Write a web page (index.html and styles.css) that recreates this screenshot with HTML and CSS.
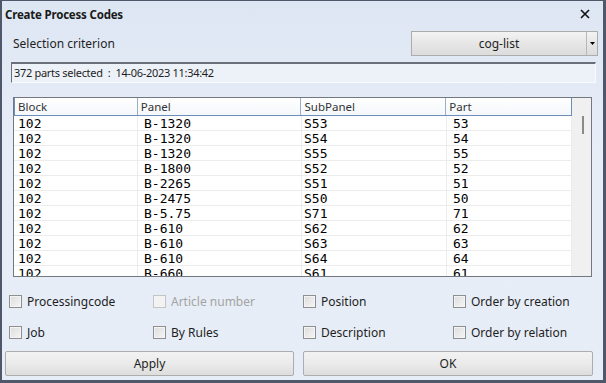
FILE: index.html
```html
<!DOCTYPE html>
<html lang="en">
<head>
    <meta charset="UTF-8">
    <title>Create Process Codes</title>
    <link rel="stylesheet" href="styles.css">
</head>
<body>
    <div class="window">
        <div class="titlebar">
            <span class="title">Create Process Codes</span>
            <svg class="close" width="10" height="10" viewBox="0 0 10 10">
                <path d="M1 1L9 9M9 1L1 9" stroke="#111" stroke-width="1.6"/>
            </svg>
        </div>

        <div class="criterion">
            <span>Selection criterion</span>
            <div class="combo">
                <span class="combo-text">cog-list</span>
                <span class="combo-arrow">
                    <svg width="5" height="3" viewBox="0 0 5 3"><path d="M0 0H5L2.5 3Z" fill="#000"/></svg>
                </span>
            </div>
        </div>

        <div class="status">372 parts selected &nbsp;: &nbsp;14-06-2023 11:34:42</div>

        <div class="grid">
            <div class="grid-main">
                <div class="row head">
                    <div class="c1">Block</div>
                    <div class="c2">Panel</div>
                    <div class="c3">SubPanel</div>
                    <div class="c4">Part</div>
                </div>
                <div class="row"><div class="c1">102</div><div class="c2">B-1320</div><div class="c3">S53</div><div class="c4">53</div></div>
                <div class="row"><div class="c1">102</div><div class="c2">B-1320</div><div class="c3">S54</div><div class="c4">54</div></div>
                <div class="row"><div class="c1">102</div><div class="c2">B-1320</div><div class="c3">S55</div><div class="c4">55</div></div>
                <div class="row"><div class="c1">102</div><div class="c2">B-1800</div><div class="c3">S52</div><div class="c4">52</div></div>
                <div class="row"><div class="c1">102</div><div class="c2">B-2265</div><div class="c3">S51</div><div class="c4">51</div></div>
                <div class="row"><div class="c1">102</div><div class="c2">B-2475</div><div class="c3">S50</div><div class="c4">50</div></div>
                <div class="row"><div class="c1">102</div><div class="c2">B-5.75</div><div class="c3">S71</div><div class="c4">71</div></div>
                <div class="row"><div class="c1">102</div><div class="c2">B-610</div><div class="c3">S62</div><div class="c4">62</div></div>
                <div class="row"><div class="c1">102</div><div class="c2">B-610</div><div class="c3">S63</div><div class="c4">63</div></div>
                <div class="row"><div class="c1">102</div><div class="c2">B-610</div><div class="c3">S64</div><div class="c4">64</div></div>
                <div class="row"><div class="c1">102</div><div class="c2">B-660</div><div class="c3">S61</div><div class="c4">61</div></div>
            </div>
            <div class="scrollbar"><span class="thumb"></span></div>
        </div>

        <div class="options">
            <label class="check"><span class="box"></span>Processingcode</label>
            <label class="check disabled"><span class="box"></span>Article number</label>
            <label class="check"><span class="box"></span>Position</label>
            <label class="check"><span class="box"></span>Order by creation</label>
            <label class="check"><span class="box"></span>Job</label>
            <label class="check"><span class="box"></span>By Rules</label>
            <label class="check"><span class="box"></span>Description</label>
            <label class="check"><span class="box"></span>Order by relation</label>
        </div>

        <div class="actions">
            <button class="button apply">Apply</button>
            <button class="button ok">OK</button>
        </div>
    </div>
</body>
</html>
```

FILE: styles.css
```css
body {
    margin: 0;
    font-family: 'Noto Sans', 'DejaVu Sans', sans-serif;
    font-size: 11px;
    color: #1e1e1e;
}
.window {
    box-sizing: border-box;
    width: 606px;
    height: 383px;
    border: 2px solid #4f576b;
    border-top-width: 1px;
    border-right-width: 3px;
    border-bottom-width: 3px;
    background: linear-gradient(to bottom, #dde6f3, #e8eef8 40%, #e6edf7);
    overflow: hidden;
}
.titlebar {
    height: 26px;
    display: flex;
    align-items: center;
    justify-content: space-between;
    padding: 0 13px 0 3px;
}
.title {
    font-weight: bold;
    font-size: 11.5px;
    color: #1a1a1a;
    letter-spacing: -0.2px;
}
.criterion {
    display: flex;
    align-items: center;
    justify-content: space-between;
    height: 25px;
    margin: 4px 5px 0 11px;
    font-size: 12px;
}
.combo {
    box-sizing: border-box;
    width: 187px;
    height: 25px;
    display: flex;
    border: 1px solid #acacac;
    background: linear-gradient(to bottom, #f3f3f3, #e6e6e6 50%, #dcdcdc);
}
.combo-text {
    flex: 1;
    text-align: center;
    line-height: 23px;
    font-size: 12px;
}
.combo-arrow {
    width: 10px;
    border-left: 1px solid #b8b8b8;
    display: flex;
    align-items: center;
    justify-content: center;
}
.status {
    box-sizing: border-box;
    height: 21px;
    margin: 6px 7px 0 9px;
    padding: 1px 2px 0;
    border: 1px solid #f8fbff;
    border-top: 2px solid #6a6f78;
    border-left: 1px solid #6a6f78;
    background: #edf2f9;
    font-size: 11px;
    letter-spacing: -0.3px;
    line-height: 16px;
}
.grid {
    box-sizing: border-box;
    display: flex;
    height: 180px;
    margin: 14px 11px 0 11px;
    border: 1px solid #737880;
    background: #fff;
    overflow: hidden;
}
.grid-main {
    width: 558px;
}
.row {
    display: flex;
    height: 14px;
    border-bottom: 1px solid #ececec;
    font-family: 'DejaVu Sans Mono', monospace;
    font-size: 13px;
    line-height: 15px;
    color: #000;
}
.row > div {
    box-sizing: border-box;
    border-right: 1px solid #ececec;
    white-space: nowrap;
}
.c1 { width: 124px; padding-left: 4px; }
.c2 { width: 164px; padding-left: 6px; }
.c3 { width: 145px; padding-left: 2px; }
.c4 { width: 125px; padding-left: 6px; }
.row.head {
    height: 17px;
    border-bottom: 1px solid #6f8db8;
    border-left: 1px solid #6f8db8;
    border-right: 1px solid #6f8db8;
    background: linear-gradient(to bottom, #ffffff, #f4f7fb);
    font-family: 'Noto Sans', 'DejaVu Sans', sans-serif;
    font-size: 11.5px;
    line-height: 17px;
    color: #333;
}
.row.head > div {
    border-right-color: #9aaecb;
    padding-left: 3px;
}
.row.head > .c1 { width: 123px; }
.row.head > .c4 { border-right: none; }
.scrollbar {
    flex: 1;
    background: #f0f0f0;
    position: relative;
}
.thumb {
    position: absolute;
    left: 10px;
    top: 18px;
    width: 2px;
    height: 18px;
    background: #8a8a8a;
}
.options {
    display: grid;
    grid-template-columns: 144px 150px 150px 1fr;
    row-gap: 13px;
    margin: 15px 0 0 7px;
    font-size: 12px;
}
.check {
    display: flex;
    align-items: center;
    height: 18px;
}
.box {
    box-sizing: border-box;
    width: 13px;
    height: 13px;
    margin-right: 5px;
    border: 1px solid #8e8f8f;
    background: linear-gradient(135deg, #dcdcdc, #f6f6f6);
    box-shadow: inset 0 0 0 1px #f4f4f4;
}
.check.disabled {
    color: #a3a3a3;
}
.check.disabled .box {
    border-color: #c4c4c4;
    background: #f2f2f2;
}
.actions {
    display: flex;
    gap: 9px;
    margin: 10px 0 0 3px;
}
.button {
    box-sizing: border-box;
    height: 25px;
    border: 1px solid #adadad;
    border-radius: 2px;
    background: linear-gradient(to bottom, #f2f2f2, #ebebeb 50%, #dddddd);
    font-family: 'Noto Sans', 'DejaVu Sans', sans-serif;
    font-size: 12px;
    color: #1e1e1e;
}
.button.apply { width: 289px; }
.button.ok { width: 290px; }
```
